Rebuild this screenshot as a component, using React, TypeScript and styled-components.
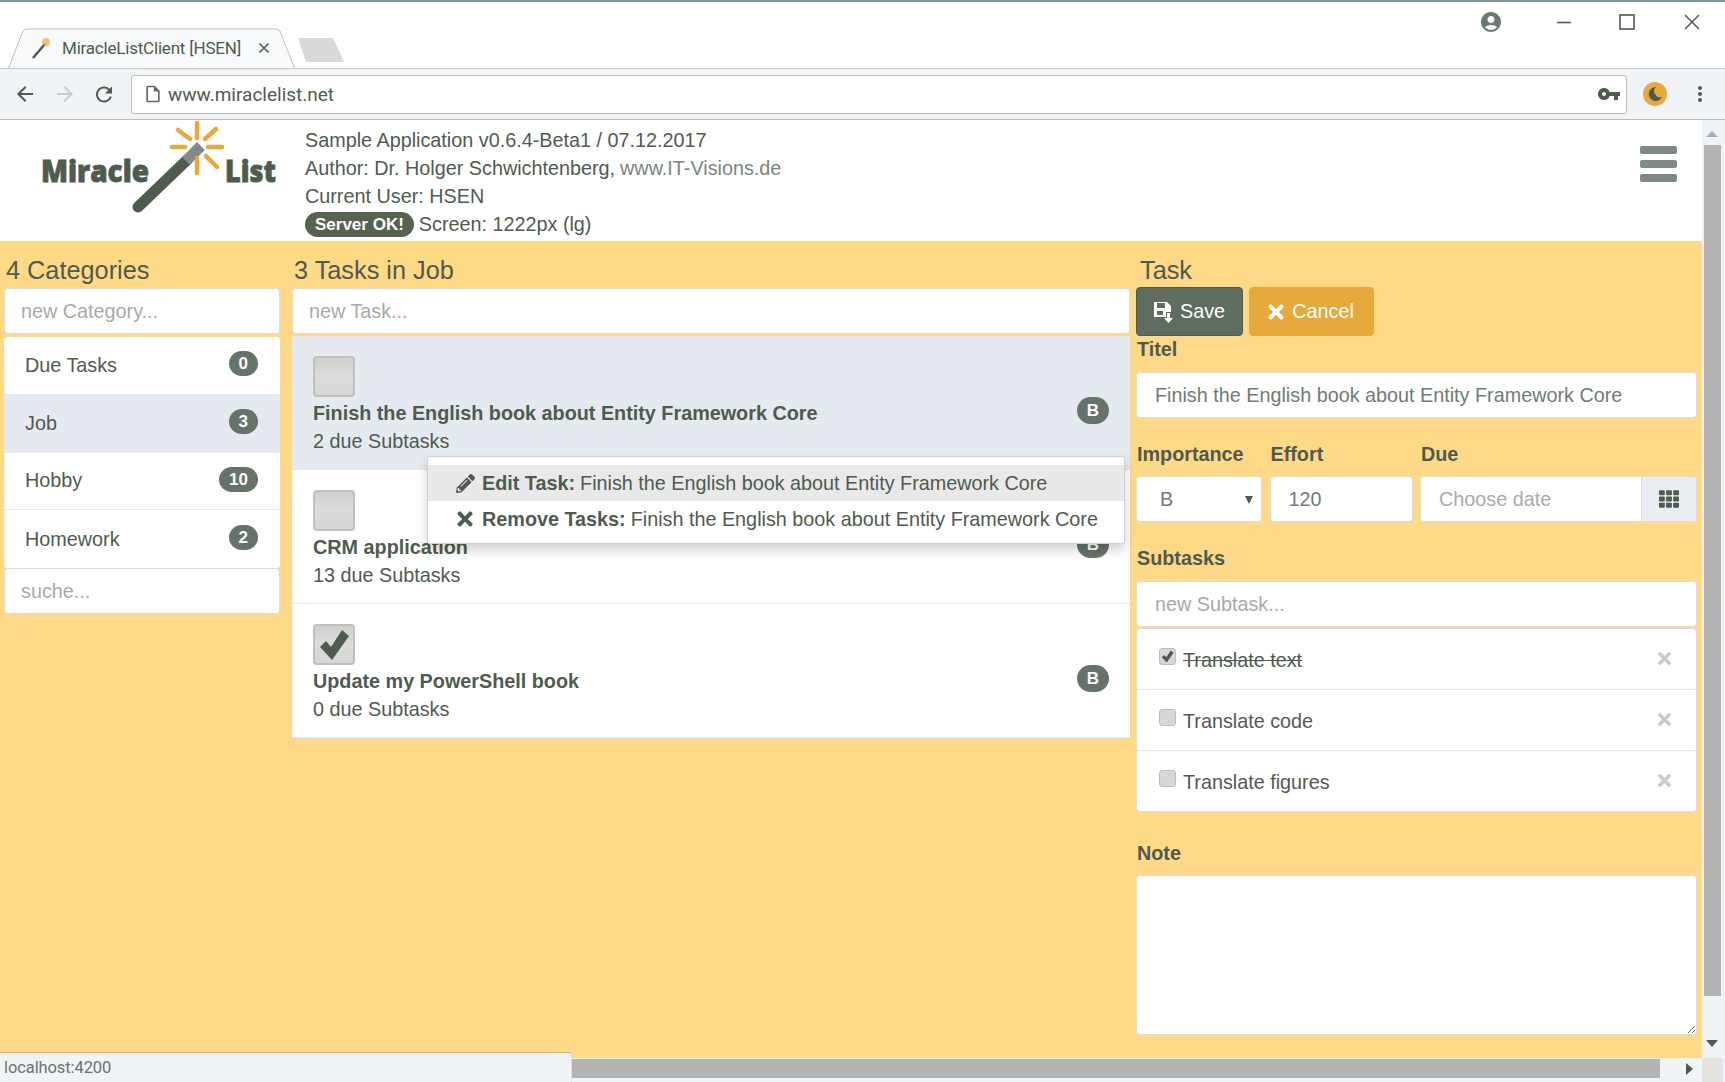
import React from "react";
import styled, { createGlobalStyle } from "styled-components";
import { FaPencilAlt, FaTimes, FaTh } from "react-icons/fa";
import { MdAccountCircle, MdArrowBack, MdArrowForward, MdRefresh, MdMoreVert, MdVpnKey, MdOutlineInsertDriveFile } from "react-icons/md";

const INK = "#4f5b4e";
const ORANGE = "#fdd988";
const AMBER = "#e8a93c";
const SELECTED = "#e5eaf0";
const BADGE = "#66736b";
const LINE = "#d9dcdc";
const CHROME = "#f1f4f6";

const Global = createGlobalStyle`
  html, body { margin: 0; padding: 0; background: #fff; overflow: hidden; }
  * { box-sizing: border-box; }
  body { font-family: "Liberation Sans", Arial, sans-serif; color: ${INK}; }
  input, textarea, select { font-family: "Liberation Sans", Arial, sans-serif; }
`;

const Screen = styled.div`
  width: 1725px; height: 1082px; display: flex; flex-direction: column; overflow: hidden; position: relative;
`;

/* ---------- browser chrome ---------- */
const TitleBar = styled.div`
  height: 68px; flex: none; display: flex; align-items: flex-end; background: #fff; border-top: 2px solid #7f949f;
`;
const Tab = styled.div`
  position: relative; width: 287px; height: 40px; margin-left: 8px; padding: 0 25px 0 23px; display: flex; align-items: center;
  font-family: Roboto, sans-serif; font-size: 17px; color: ${INK};
`;
const TabOutline = styled.svg`
  position: absolute; left: 0; top: 0; z-index: 0;
`;
const TabFavicon = styled.svg`
  position: relative; flex: none; margin-right: 11px;
`;
const TabLabel = styled.span`
  position: relative; white-space: nowrap; letter-spacing: -0.2px;
`;
const TabClose = styled.span`
  position: relative; margin-left: auto; display: flex;
`;
const NewTab = styled.svg`
  flex: none; margin: 0 0 6px 2px;
`;
const WindowControls = styled.div`
  margin-left: auto; align-self: flex-start; display: flex; padding: 8px 21px 0 0;
`;
const WindowIcon = styled.div<{ $gap: number }>`
  width: 24px; height: 24px; display: flex; align-items: center; justify-content: center; margin-left: ${(p) => p.$gap}px;
  color: ${INK};
`;

const Toolbar = styled.div`
  height: 52px; flex: none; display: flex; align-items: center; background: ${CHROME};
  border-top: 1px solid #c8c8c6; border-bottom: 1px solid #bcbcba; padding-left: 13px;
`;
const NavIcon = styled.div<{ $gap?: number; $dim?: boolean }>`
  width: 24px; height: 24px; flex: none; display: flex; align-items: center; justify-content: center;
  margin-left: ${(p) => p.$gap ?? 0}px; color: ${(p) => (p.$dim ? "#c9cccc" : INK)};
`;
const UrlBox = styled.div`
  width: 1496px; height: 39px; margin-left: 15px; background: #fff; border: 1px solid #bdbdbd; border-radius: 3px; flex: none;
  display: flex; align-items: center; padding: 0 5px 0 11px; font-family: Roboto, sans-serif; font-size: 19px; color: ${INK};
`;
const UrlText = styled.span`
  margin-left: 5px;
`;
const UrlKey = styled.span`
  margin-left: auto; display: flex; color: ${INK};
`;

/* ---------- viewport ---------- */
const Viewport = styled.div`
  flex: 1; display: grid; grid-template-columns: 1702px 23px; grid-template-rows: 938px 24px; background: ${CHROME}; position: relative;
`;
const Page = styled.div`
  display: flex; flex-direction: column; min-height: 0;
`;
const Header = styled.header`
  height: 121px; flex: none; background: #fff; display: flex;
`;
const Logo = styled.svg`
  flex: none; display: block;
`;
const InfoBlock = styled.div`
  padding-top: 6px; font-size: 19.8px; line-height: 28px; color: ${INK}; white-space: nowrap;
`;
const InfoLine = styled.div`
  display: flex; align-items: center; gap: 5px; height: 28px;
`;
const Muted = styled.span`
  color: #7a857e;
`;
const Pill = styled.span`
  background: #56644f; color: #fff; font-weight: 700; font-size: 17px; line-height: 25px; height: 25px; padding: 0 10px; border-radius: 13px;
`;
const Hamburger = styled.div`
  margin-left: auto; padding: 26px 25px 0 0; display: flex; flex-direction: column; gap: 6px;
`;
const HamburgerBar = styled.span`
  display: block; width: 37px; height: 8px; border-radius: 2px; background: #7f8a86;
`;

const Body = styled.main`
  flex: 1; background: ${ORANGE}; display: flex; padding: 14px 0 0 4px; min-height: 0;
`;
const Column = styled.section<{ $width: number; $after: number }>`
  width: ${(p) => p.$width}px; margin-right: ${(p) => p.$after}px; flex: none; display: flex; flex-direction: column;
`;
const Heading = styled.h2<{ $indent?: number; $after?: number }>`
  margin: 0 0 ${(p) => p.$after ?? 3}px; padding-left: ${(p) => p.$indent ?? 2}px; height: 30px; line-height: 30px; font-size: 25.3px; font-weight: 400; color: ${INK};
`;
const TextField = styled.input<{ $indent?: number }>`
  display: block; width: 100%; height: 46px; flex: none; background: #fff; border: 1px solid ${LINE}; border-radius: 4px;
  padding: 0 10px 0 ${(p) => p.$indent ?? 16}px; font-size: 19.8px; color: #6f7c74; outline: none;
  &::placeholder { color: #a8a9a8; opacity: 1; }
`;
const CategoryList = styled.ul`
  list-style: none; margin: 3px 0 0; padding: 0; background: #fff; border-radius: 4px; overflow: hidden;
`;
const CategoryRow = styled.li<{ $selected?: boolean }>`
  height: 57.75px; display: flex; align-items: center; justify-content: space-between; padding: 0 22px 0 21px;
  background: ${(p) => (p.$selected ? SELECTED : "#fff")}; border-bottom: 1px solid #e6e9ec; font-size: 19.8px; color: ${INK};
  &:last-child { border-bottom: 0; }
`;
const Badge = styled.span<{ $task?: boolean }>`
  min-width: ${(p) => (p.$task ? 31 : 29)}px; height: ${(p) => (p.$task ? 27 : 25)}px; line-height: ${(p) => (p.$task ? 27 : 25)}px;
  padding: 0 10px; border-radius: 14px; background: ${BADGE}; color: #fff;
  font-size: 17px; font-weight: 700; text-align: center; flex: none; margin-top: ${(p) => (p.$task ? 41 : -3)}px;
`;

const TaskList = styled.ul`
  position: relative; list-style: none; margin: 2px 0 0; padding: 0; background: #fff; border-radius: 4px; border-bottom: 1px solid ${LINE};
`;
const TaskRow = styled.li<{ $selected?: boolean }>`
  height: 134px; display: flex; justify-content: space-between; align-items: flex-start; padding: 20px 21px 0;
  background: ${(p) => (p.$selected ? SELECTED : "#fff")}; border-bottom: 1px solid #e6e9ec;
  &:last-child { border-bottom: 0; }
`;
const TaskBody = styled.div`
  display: flex; flex-direction: column; align-items: flex-start;
`;
const BigCheck = styled.span`
  width: 42px; height: 41px; background: linear-gradient(#d0d0d0, #dcdcdc 50%, #d6d6d6); border: 2px solid #bfc1c1; border-radius: 4px;
  display: flex; align-items: center; justify-content: center; color: ${INK};
`;
const TaskTitle = styled.div`
  margin-top: 2px; font-size: 19.8px; line-height: 28px; font-weight: 700; color: ${INK};
`;
const TaskSub = styled.div`
  font-size: 19.8px; line-height: 28px; color: ${INK};
`;
const ContextMenu = styled.div`
  position: absolute; left: 135px; top: 120px; width: 698px; height: 88px; padding-top: 8px; background: #fff;
  border: 1px solid #cfd1d1; border-radius: 3px; box-shadow: 0 6px 12px rgba(0, 0, 0, 0.18); z-index: 3;
`;
const MenuItem = styled.div<{ $active?: boolean }>`
  height: 36px; display: flex; align-items: center; padding-left: 27px; font-size: 19.8px; white-space: nowrap; color: ${INK};
  background: ${(p) => (p.$active ? "#e9e9e9" : "transparent")};
`;
const MenuIcon = styled.span`
  width: 20px; margin-right: 7px; display: flex; justify-content: center; flex: none;
`;
const MenuLead = styled.b`
  margin-right: 5px; font-weight: 700;
`;

const ButtonRow = styled.div`
  display: flex; gap: 6px;
`;
const ActionButton = styled.button<{ $tone: "save" | "cancel"; $width: number }>`
  width: ${(p) => p.$width}px; height: 49px; border-radius: 4px; color: #fff; font-size: 19.8px; font-family: "Liberation Sans", Arial, sans-serif;
  display: flex; align-items: center; justify-content: center; gap: ${(p) => (p.$tone === "save" ? 6 : 5)}px;
  padding: 0 ${(p) => (p.$tone === "save" ? 0 : 4)}px 0 0;
  background: ${(p) => (p.$tone === "save" ? "#5f6c60" : AMBER)};
  border: 1px solid ${(p) => (p.$tone === "save" ? "#4f5b4e" : AMBER)};
`;
const FieldLabel = styled.label<{ $top?: number; $after?: number }>`
  display: block; margin: ${(p) => p.$top ?? 3}px 0 ${(p) => p.$after ?? 13}px 1px; font-size: 19.8px; line-height: 20px; font-weight: 700; color: ${INK};
`;
const FieldGrid = styled.div`
  display: grid; grid-template-columns: 126px 143px 277px; column-gap: 7.5px;
`;
const FieldCell = styled.div`
  display: flex; flex-direction: column;
`;
const SelectWrap = styled.div`
  position: relative; height: 46px;
`;
const SelectBox = styled.select`
  width: 100%; height: 46px; appearance: none; background: #fff; border: 1px solid ${LINE}; border-radius: 4px; padding-left: 23px;
  font-size: 19.8px; color: #6f7c74; outline: none;
`;
const SelectArrow = styled.span`
  position: absolute; right: 9px; top: 20px; width: 0; height: 0; pointer-events: none;
  border-left: 4px solid transparent; border-right: 4px solid transparent; border-top: 8px solid ${INK};
`;
const DateGroup = styled.div`
  display: flex; height: 46px;
`;
const DateInput = styled(TextField)`
  flex: 1; width: auto; min-width: 0; border-radius: 4px 0 0 4px;
`;
const DateAddon = styled.span`
  width: 55px; flex: none; display: flex; align-items: center; justify-content: center; background: #e9edf1; border: 1px solid ${LINE};
  border-left: 0; border-radius: 0 4px 4px 0; color: ${INK};
`;
const SubtaskList = styled.ul`
  list-style: none; margin: 1px 0 0; padding: 0; background: #fff; border: 1px solid ${LINE}; border-radius: 4px;
`;
const SubtaskRow = styled.li`
  height: 61px; display: flex; align-items: center; padding: 2px 22px 0 22px; border-bottom: 1px solid #e6e9ec; font-size: 19.8px;
  &:last-child { border-bottom: 0; height: 60px; }
`;
const SmallCheck = styled.span`
  width: 17px; height: 17px; flex: none; margin: -8px 7px 0 0; background: #d8d8d8; border: 1px solid #bdbfbf; border-radius: 3px;
  display: flex; align-items: center; justify-content: center; color: ${INK};
`;
const SubtaskText = styled.span<{ $done?: boolean }>`
  color: ${INK}; text-decoration: ${(p) => (p.$done ? "line-through" : "none")};
`;
const SubtaskRemove = styled.span`
  margin: -4px 0 0 auto; display: flex; color: #c9cbca;
`;
const NoteArea = styled.textarea`
  display: block; width: 100%; height: 160px; background: #fff; border: 1px solid ${LINE}; border-radius: 4px; outline: none;
`;

/* ---------- scrollbars and status ---------- */
const VScroll = styled.div`
  display: flex; flex-direction: column; align-items: center; padding: 11px 4px 0 1px; background: ${CHROME};
`;
const ArrowUp = styled.span`
  width: 0; height: 0; border-left: 6px solid transparent; border-right: 6px solid transparent; border-bottom: 6px solid #a9aeae;
`;
const VThumb = styled.span`
  width: 17px; height: 851px; margin: 8px 0 44px; background: #b4b4b4; flex: none;
`;
const ArrowDown = styled.span`
  width: 0; height: 0; border-left: 6px solid transparent; border-right: 6px solid transparent; border-top: 7px solid ${INK};
`;
const HScroll = styled.div`
  display: flex; align-items: flex-start; padding: 1px 0 0 572px; background: ${CHROME};
`;
const HThumb = styled.span`
  width: 1088px; height: 19px; background: #b4b4b4; flex: none;
`;
const ArrowRight = styled.span`
  width: 0; height: 0; margin: 4px 0 0 26px; border-top: 6px solid transparent; border-bottom: 6px solid transparent; border-left: 7px solid ${INK};
`;
const Corner = styled.div`
  background: #e3e3e0; margin-right: 2px;
`;
const StatusBubble = styled.div`
  position: absolute; left: 0; bottom: 0; width: 572px; height: 30px; padding-left: 4px; display: flex; align-items: center;
  background: ${CHROME}; border-top: 1px solid #dfb35e; border-right: 1px solid #dde1e4; border-top-right-radius: 3px;
  font-family: Roboto, sans-serif; font-size: 16.5px; color: #6a736e; letter-spacing: -0.1px; z-index: 4;
`;

const rays: [number, number, number, number][] = [
  [197, 3, 197, 18], [178, 10, 190, 19], [216, 9, 205, 19], [172, 27, 185, 27],
  [208, 27, 222, 27], [206, 36, 217, 47], [197, 38, 197, 53],
];

const LogoMark = () => (
  <Logo width={305} height={121} viewBox="0 0 305 121">
    <text x={41} y={62} fontFamily="'Open Sans', sans-serif" fontWeight={800} fontSize={30} fill={INK} stroke={INK} strokeWidth={0.8} textLength={108} lengthAdjust="spacingAndGlyphs">Miracle</text>
    <text x={225} y={62} fontFamily="'Open Sans', sans-serif" fontWeight={800} fontSize={30} fill={INK} stroke={INK} strokeWidth={0.8} textLength={51} lengthAdjust="spacingAndGlyphs">List</text>
    <line x1={138} y1={87} x2={187} y2={40} stroke={INK} strokeWidth={11} strokeLinecap="round" />
    <line x1={186} y1={41} x2={201} y2={26} stroke="#7f8c87" strokeWidth={11} />
    {rays.map(([a, b, c, d], i) => (
      <line key={i} x1={a} y1={b} x2={c} y2={d} stroke={AMBER} strokeWidth={4.5} strokeLinecap="round" />
    ))}
  </Logo>
);

const SaveGlyph = () => (
  <svg width="20" height="22" viewBox="0 0 20 22" fill="#fff">
    <path d="M0 1h13l4 4v6h-5v5H0zM3 2v5h8V2zM3 10v4h6v-4z" fillRule="evenodd" />
    <path d="M13 12h3v5h3l-4.500 5-4.500-5h3z" />
  </svg>
);

const HeavyCheck = ({ size }: { size: number }) => (
  <svg width={size} height={size} viewBox="0 0 32 32" fill="currentColor">
    <path d="M2 18L8 12L13 18L24 1L31 7L14 31Z" />
  </svg>
);

const categories = [
  { name: "Due Tasks", count: 0 },
  { name: "Job", count: 3, selected: true },
  { name: "Hobby", count: 10 },
  { name: "Homework", count: 2 },
];
const tasks = [
  { title: "Finish the English book about Entity Framework Core", sub: "2 due Subtasks", selected: true },
  { title: "CRM application", sub: "13 due Subtasks" },
  { title: "Update my PowerShell book", sub: "0 due Subtasks", done: true },
];
const subtasks = [
  { text: "Translate text", done: true },
  { text: "Translate code" },
  { text: "Translate figures" },
];
const BOOK = "Finish the English book about Entity Framework Core";

export default function App() {
  return (
    <Screen>
      <Global />
      <TitleBar>
        <Tab>
          <TabOutline width={287} height={40} viewBox="0 0 287 40">
            <path d="M0.500 40 L15 3 Q16 1 19 1 H268 Q271 1 272 3 L286.500 40" fill="#f8fafb" stroke="#bdbfbf" />
          </TabOutline>
          <TabFavicon width={20} height={22} viewBox="0 0 20 22">
            <line x1={2} y1={21} x2={14} y2={7} stroke={INK} strokeWidth={2.5} />
            <circle cx={15} cy={5} r={4} fill={AMBER} opacity={0.7} />
          </TabFavicon>
          <TabLabel>MiracleListClient [HSEN]</TabLabel>
          <TabClose>
            <svg width="12" height="12" viewBox="0 0 12 12"><path d="M1.500 1.500l9 9M10.500 1.500l-9 9" stroke={INK} strokeWidth="1.600" /></svg>
          </TabClose>
        </Tab>
        <NewTab width={47} height={24} viewBox="0 0 47 24">
          <path d="M1 0H36L47 24H9z" fill="#d9d9d7" />
        </NewTab>
        <WindowControls>
          <WindowIcon $gap={0}><MdAccountCircle size={24} color="#6b7872" /></WindowIcon>
          <WindowIcon $gap={49}>
            <svg width="16" height="16" viewBox="0 0 16 16"><line x1="1" y1="8.500" x2="15" y2="8.500" stroke={INK} strokeWidth="1.600" /></svg>
          </WindowIcon>
          <WindowIcon $gap={39}>
            <svg width="16" height="16" viewBox="0 0 16 16"><rect x="1" y="1" width="14" height="14" fill="none" stroke={INK} strokeWidth="1.600" /></svg>
          </WindowIcon>
          <WindowIcon $gap={41}>
            <svg width="16" height="16" viewBox="0 0 16 16"><path d="M1 1l14 14M15 1L1 15" stroke={INK} strokeWidth="1.500" /></svg>
          </WindowIcon>
        </WindowControls>
      </TitleBar>

      <Toolbar>
        <NavIcon><MdArrowBack size={24} /></NavIcon>
        <NavIcon $gap={16} $dim><MdArrowForward size={24} /></NavIcon>
        <NavIcon $gap={15}><MdRefresh size={27} /></NavIcon>
        <UrlBox>
          <MdOutlineInsertDriveFile size={20} color="#5f6b62" />
          <UrlText>www.miraclelist.net</UrlText>
          <UrlKey><MdVpnKey size={24} /></UrlKey>
        </UrlBox>
        <NavIcon $gap={16}>
          <svg width="24" height="24" viewBox="0 0 24 24">
            <circle cx="12" cy="12" r="12" fill={AMBER} />
            <path d="M13 5a7 7 0 1 0 6 10a6 6 0 0 1-6-10z" fill={INK} />
          </svg>
        </NavIcon>
        <NavIcon $gap={21}><MdMoreVert size={24} /></NavIcon>
      </Toolbar>

      <Viewport>
        <Page>
          <Header>
            <LogoMark />
            <InfoBlock>
              <InfoLine>Sample Application v0.6.4-Beta1 / 07.12.2017</InfoLine>
              <InfoLine>Author: Dr. Holger Schwichtenberg, <Muted>www.IT-Visions.de</Muted></InfoLine>
              <InfoLine>Current User: HSEN</InfoLine>
              <InfoLine><Pill>Server OK!</Pill> Screen: 1222px (lg)</InfoLine>
            </InfoBlock>
            <Hamburger>
              <HamburgerBar /><HamburgerBar /><HamburgerBar />
            </Hamburger>
          </Header>

          <Body>
            <Column $width={276} $after={12}>
              <Heading>4 Categories</Heading>
              <TextField placeholder="new Category..." />
              <CategoryList>
                {categories.map((c) => (
                  <CategoryRow key={c.name} $selected={c.selected}>
                    {c.name}
                    <Badge>{c.count}</Badge>
                  </CategoryRow>
                ))}
              </CategoryList>
              <TextField placeholder="suche..." />
            </Column>

            <Column $width={838} $after={6}>
              <Heading>3 Tasks in Job</Heading>
              <TextField placeholder="new Task..." />
              <TaskList>
                {tasks.map((t) => (
                  <TaskRow key={t.title} $selected={t.selected}>
                    <TaskBody>
                      <BigCheck>{t.done && <HeavyCheck size={32} />}</BigCheck>
                      <TaskTitle>{t.title}</TaskTitle>
                      <TaskSub>{t.sub}</TaskSub>
                    </TaskBody>
                    <Badge $task>B</Badge>
                  </TaskRow>
                ))}
                <ContextMenu>
                  <MenuItem $active>
                    <MenuIcon><FaPencilAlt size={19} /></MenuIcon>
                    <MenuLead>Edit Task:</MenuLead> {BOOK}
                  </MenuItem>
                  <MenuItem>
                    <MenuIcon><FaTimes size={22} /></MenuIcon>
                    <MenuLead>Remove Tasks:</MenuLead> {BOOK}
                  </MenuItem>
                </ContextMenu>
              </TaskList>
            </Column>

            <Column $width={561} $after={0}>
              <Heading $indent={4} $after={2}>Task</Heading>
              <ButtonRow>
                <ActionButton $tone="save" $width={107}><SaveGlyph /> Save</ActionButton>
                <ActionButton $tone="cancel" $width={125}><FaTimes size={22} /> Cancel</ActionButton>
              </ButtonRow>
              <FieldLabel>Titel</FieldLabel>
              <TextField $indent={18} defaultValue={BOOK} />
              <FieldGrid>
                <FieldCell>
                  <FieldLabel $top={26} $after={12}>Importance</FieldLabel>
                  <SelectWrap>
                    <SelectBox defaultValue="B">
                      <option>A</option><option>B</option><option>C</option>
                    </SelectBox>
                    <SelectArrow />
                  </SelectWrap>
                </FieldCell>
                <FieldCell>
                  <FieldLabel $top={26} $after={12}>Effort</FieldLabel>
                  <TextField $indent={18} defaultValue="120" />
                </FieldCell>
                <FieldCell>
                  <FieldLabel $top={26} $after={12}>Due</FieldLabel>
                  <DateGroup>
                    <DateInput $indent={18} placeholder="Choose date" />
                    <DateAddon><FaTh size={20} /></DateAddon>
                  </DateGroup>
                </FieldCell>
              </FieldGrid>
              <FieldLabel $top={26}>Subtasks</FieldLabel>
              <TextField $indent={18} placeholder="new Subtask..." />
              <SubtaskList>
                {subtasks.map((s) => (
                  <SubtaskRow key={s.text}>
                    <SmallCheck>{s.done && <HeavyCheck size={13} />}</SmallCheck>
                    <SubtaskText $done={s.done}>{s.text}</SubtaskText>
                    <SubtaskRemove><FaTimes size={19} /></SubtaskRemove>
                  </SubtaskRow>
                ))}
              </SubtaskList>
              <FieldLabel $top={31} $after={12}>Note</FieldLabel>
              <NoteArea />
            </Column>
          </Body>
        </Page>

        <VScroll>
          <ArrowUp />
          <VThumb />
          <ArrowDown />
        </VScroll>
        <HScroll>
          <HThumb />
          <ArrowRight />
        </HScroll>
        <Corner />
        <StatusBubble>localhost:4200</StatusBubble>
      </Viewport>
    </Screen>
  );
}
